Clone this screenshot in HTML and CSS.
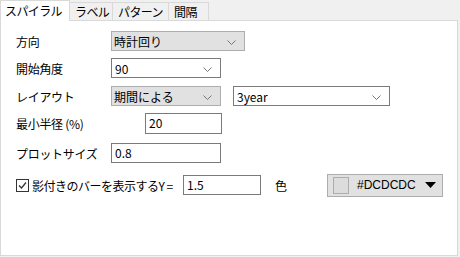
FILE: index.html
```html
<!DOCTYPE html>
<html>
<head>
  <title>スパイラル</title>
  <link rel="stylesheet" href="styles.css">
</head>
<body>
  <div class="tabs">
    <div class="tab active">スパイラル</div>
    <div class="tab t-label">ラベル</div>
    <div class="tab t-pattern">パターン</div>
    <div class="tab t-gap">間隔</div>
  </div>

  <div class="panel">
    <div class="row r1">
      <span class="label">方向</span>
      <div class="combo gray w134"><span>時計回り</span><svg class="chev" width="9" height="5"><polyline points="0.5,0.5 4.5,4.5 8.5,0.5" fill="none" stroke="#777" /></svg></div>
    </div>

    <div class="row r2">
      <span class="label">開始角度</span>
      <div class="combo w110"><span>90</span><svg class="chev" width="9" height="5"><polyline points="0.5,0.5 4.5,4.5 8.5,0.5" fill="none" stroke="#777" /></svg></div>
    </div>

    <div class="row r3">
      <span class="label">レイアウト</span>
      <div class="combo gray w110"><span>期間による</span><svg class="chev" width="9" height="5"><polyline points="0.5,0.5 4.5,4.5 8.5,0.5" fill="none" stroke="#777" /></svg></div>
      <div class="combo w157 gap12"><span>3year</span><svg class="chev" width="9" height="5"><polyline points="0.5,0.5 4.5,4.5 8.5,0.5" fill="none" stroke="#777" /></svg></div>
    </div>

    <div class="row r4">
      <span class="label">最小半径 (%)</span>
      <div class="field w77 shift34">20</div>
    </div>

    <div class="row r5">
      <span class="label">プロットサイズ</span>
      <div class="field w110">0.8</div>
    </div>

    <div class="row r6">
      <span class="check">
        <svg width="13" height="13"><rect x="0.5" y="0.5" width="12" height="12" fill="#fff" stroke="#333" /><polyline points="3,6.5 5.5,9 10,3.5" fill="none" stroke="#333" stroke-width="1.2" /></svg>
      </span>
      <span class="check-text">影付きのバーを表示するY =</span>
      <div class="field w78">1.5</div>
      <span class="color-label">色</span>
      <div class="color-btn">
        <span class="swatch"></span>
        <span class="color-text">#DCDCDC</span>
        <svg class="arrow" width="11" height="6"><polygon points="0,0 11,0 5.5,6" fill="#000" /></svg>
      </div>
    </div>
  </div>
</body>
</html>
```

FILE: styles.css
```css
/* General Styles */
body {
  margin: 0;
  padding: 0;
  width: 460px;
  height: 257px;
  overflow: hidden;
  background-color: #f0f0f0;
  font-family: "Noto Sans CJK JP", "Liberation Sans", sans-serif;
  font-size: 12px;
  color: #000000;
}

/* Tabs */
.tabs {
  display: flex;
  height: 20px;
  position: relative;
  z-index: 1;
}

.tab {
  height: 18px;
  margin-top: 2px;
  padding-left: 5px;
  line-height: 17px;
  border: 1px solid #d9d9d9;
  border-bottom: none;
  border-left: none;
  background-color: #f0f0f0;
  box-sizing: border-box;
  white-space: nowrap;
  letter-spacing: -0.6px;
}

.tab.active {
  width: 70px;
  height: 21px;
  margin-top: 0;
  padding-left: 4px;
  line-height: 20px;
  border-left: 1px solid #d9d9d9;
  background-color: #ffffff;
}

.t-label { width: 43px; }
.t-pattern { width: 56px; }
.t-gap { width: 40px; }

/* Panel */
.panel {
  width: 458px;
  height: 236px;
  box-sizing: border-box;
  border: 1px solid #d9d9d9;
  background-color: #ffffff;
  padding: 10px 0 0 15px;
}

.row {
  display: flex;
  align-items: center;
  height: 20px;
  white-space: nowrap;
}

.r2 { margin-top: 7px; }
.r3 { margin-top: 8px; }
.r4 { margin-top: 7px; }
.r5 { margin-top: 10px; }
.r6 { margin-top: 12px; }

.label {
  width: 95px;
  flex-shrink: 0;
  letter-spacing: -0.3px;
}

/* Combo boxes */
.combo {
  height: 20px;
  box-sizing: border-box;
  border: 1px solid #7a7a7a;
  background-color: #ffffff;
  display: flex;
  align-items: center;
  justify-content: space-between;
  padding: 0 8px 0 3px;
}

.combo.gray {
  background-color: #e1e1e1;
  border-color: #adadad;
  padding-left: 2px;
}

.chev {
  display: block;
  margin-top: 2px;
}

.w134 { width: 134px; }
.w110 { width: 110px; }
.w157 { width: 157px; }
.w77 { width: 77px; }
.w78 { width: 78px; }
.gap12 { margin-left: 12px; }
.shift34 { margin-left: 34px; }

/* Text fields */
.field {
  height: 20px;
  box-sizing: border-box;
  border: 1px solid #7a7a7a;
  padding: 0 3px;
  line-height: 17px;
  flex-shrink: 0;
}

.r4 .field {
  height: 21px;
}

/* Checkbox row */
.check {
  display: flex;
  margin-right: 3px;
}

.check svg {
  display: block;
}

.check-text {
  width: 151px;
  flex-shrink: 0;
  letter-spacing: -0.5px;
}

.color-label {
  margin-left: 14px;
}

.color-btn {
  margin-left: 40px;
  width: 116px;
  height: 23px;
  box-sizing: border-box;
  border: 1px solid #adadad;
  background-color: #e1e1e1;
  display: flex;
  align-items: center;
  padding: 0 6px 0 5px;
}

.swatch {
  width: 14px;
  height: 15px;
  border: 1px solid #adadad;
  background-color: #dcdcdc;
}

.color-text {
  margin-left: 8px;
  flex: 1;
  font-family: "Liberation Sans", sans-serif;
}

.arrow {
  display: block;
}
```
